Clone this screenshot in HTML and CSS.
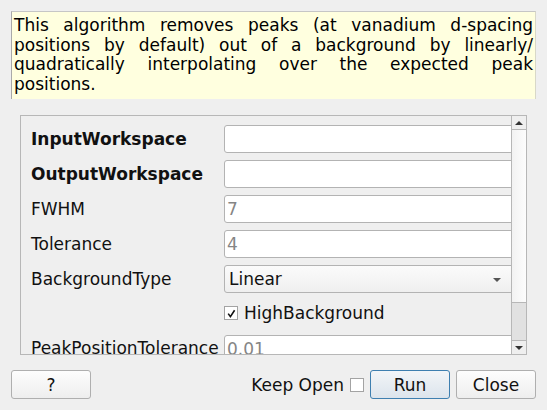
FILE: index.html
```html
<!DOCTYPE html>
<html>
<head>
<meta charset="utf-8">
<link rel="stylesheet" href="styles.css">
</head>
<body>
<div class="dialog">
  <div class="desc">
    <span class="line">This algorithm removes peaks (at vanadium d-spacing</span>
    <span class="line">positions by default) out of a background by linearly/</span>
    <span class="line">quadratically interpolating over the expected peak</span>
    <span class="line last">positions.</span>
  </div>

  <div class="scroll">
    <div class="viewport">
      <div class="form">
        <div class="label bold">InputWorkspace</div>
        <div class="field"></div>

        <div class="label bold">OutputWorkspace</div>
        <div class="field"></div>

        <div class="label">FWHM</div>
        <div class="field grey">7</div>

        <div class="label">Tolerance</div>
        <div class="field grey">4</div>

        <div class="label">BackgroundType</div>
        <div class="combo"><span>Linear</span><span class="combo-arrow"></span></div>

        <div class="label"></div>
        <div class="check-row">
          <span class="checkbox">
            <svg width="11" height="11" viewBox="0 0 11 11"><path d="M2.2 5.6 L4.4 8.6 L8.6 2.2" fill="none" stroke="#111" stroke-width="1.6"/></svg>
          </span>
          <span>HighBackground</span>
        </div>

        <div class="label last-label">PeakPositionTolerance</div>
        <div class="field grey">0.01</div>
      </div>
    </div>
    <div class="vscroll">
      <div class="sb-btn"><span class="tri-up"></span></div>
      <div class="sb-handle"></div>
      <div class="sb-track"></div>
      <div class="sb-btn sb-down"><span class="tri-down"></span></div>
    </div>
  </div>

  <div class="buttons">
    <button class="btn">?</button>
    <div class="spacer"></div>
    <span class="keep">Keep Open</span>
    <span class="checkbox keep-box"></span>
    <button class="btn run">Run</button>
    <button class="btn">Close</button>
  </div>
</div>
</body>
</html>
```

FILE: styles.css
```css
html, body {
  margin: 0;
  padding: 0;
  background: #efefef;
}

body {
  width: 547px;
  height: 410px;
  overflow: hidden;
  font-family: "DejaVu Sans", sans-serif;
  font-size: 17px;
  color: #111;
}

.dialog {
  display: flex;
  flex-direction: column;
  padding-top: 11px;
}

.desc {
  margin: 0 11px;
  height: 88px;
  box-sizing: border-box;
  background: #ffffdf;
  border-left: 1px solid #a9a9a9;
  border-top: 1px solid #c6c6c6;
  border-right: 1px solid #d8d8c8;
  padding: 4px 2px 0 2px;
  line-height: 19.7px;
  color: #000;
}

.line {
  display: block;
  text-align: justify;
  text-align-last: justify;
  white-space: nowrap;
}

.line.last {
  text-align-last: left;
}

.scroll {
  margin: 16px 20px 0 20px;
  height: 240px;
  box-sizing: border-box;
  border: 1px solid #b7b7b7;
  display: flex;
}

.viewport {
  flex: 1;
  overflow: hidden;
  min-width: 0;
}

.form {
  width: calc(100% + 8px);
  box-sizing: border-box;
  padding: 9px 0 0 10px;
  display: grid;
  grid-template-columns: 193px 1fr;
  grid-auto-rows: 28px;
  row-gap: 7px;
}

.form > :nth-child(11),
.form > :nth-child(12) {
  height: 26px;
  align-self: start;
}

.label {
  display: flex;
  align-items: center;
  white-space: nowrap;
}

.last-label {
  padding-bottom: 3px;
}

.bold {
  font-weight: bold;
}

.field {
  box-sizing: border-box;
  height: 28px;
  border: 1px solid #b3b3b3;
  border-radius: 3px;
  background: #fff;
  display: flex;
  align-items: center;
  padding-left: 2px;
}

.grey {
  color: #858585;
}

.combo {
  box-sizing: border-box;
  height: 28px;
  border: 1px solid #b3b3b3;
  border-radius: 3px;
  background: linear-gradient(#fbfbfb, #efefef);
  display: flex;
  align-items: center;
  padding-left: 4px;
  padding-right: 17px;
  justify-content: space-between;
}

.combo-arrow {
  width: 0;
  height: 0;
  border-left: 4px solid transparent;
  border-right: 4px solid transparent;
  border-top: 4px solid #555;
  margin-top: 2px;
}

.check-row {
  display: flex;
  align-items: center;
  gap: 6px;
}

.checkbox {
  box-sizing: border-box;
  width: 14px;
  height: 14px;
  border: 1px solid #a3a3a3;
  background: #fff;
  display: inline-flex;
  align-items: center;
  justify-content: center;
}

.vscroll {
  width: 14px;
  border-left: 1px solid #b7b7b7;
  display: flex;
  flex-direction: column;
  background: #efefef;
}

.sb-btn {
  height: 13px;
  border-bottom: 1px solid #b7b7b7;
  display: flex;
  align-items: center;
  justify-content: center;
  background: #efefef;
}

.sb-down {
  border-bottom: none;
  border-top: 1px solid #b7b7b7;
}

.tri-up {
  width: 0;
  height: 0;
  border-left: 4px solid transparent;
  border-right: 4px solid transparent;
  border-bottom: 4px solid #333;
}

.tri-down {
  width: 0;
  height: 0;
  border-left: 4px solid transparent;
  border-right: 4px solid transparent;
  border-top: 4px solid #333;
}

.sb-handle {
  height: 172px;
  background: linear-gradient(to right, #f2f2f2, #fdfdfd);
  border-bottom: 1px solid #b7b7b7;
}

.sb-track {
  flex: 1;
  background: #e1e1e1;
}

.buttons {
  margin: 15px 11px 0 11px;
  display: flex;
  align-items: center;
}

.spacer {
  flex: 1;
}

.btn {
  box-sizing: border-box;
  width: 80px;
  height: 29px;
  border: 1px solid #afafaf;
  border-radius: 3px;
  background: linear-gradient(#fdfdfd, #eeeeee);
  font-family: "DejaVu Sans", sans-serif;
  font-size: 17px;
  color: #111;
  padding: 0;
}

.btn.run {
  border-color: #3e7fb0;
  background: linear-gradient(#f2f5f8, #dce4ec);
  margin-right: 6px;
}

.keep {
  margin-right: 6px;
}

.keep-box {
  margin-right: 6px;
}
```
